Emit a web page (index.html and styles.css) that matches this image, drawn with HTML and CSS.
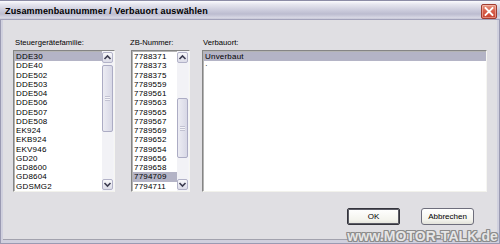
FILE: index.html
```html
<!DOCTYPE html>
<html lang="de">
<head>
<meta charset="utf-8">
<title>Zusammenbaunummer / Verbauort auswählen</title>
<link rel="stylesheet" href="styles.css">
</head>
<body>
<div class="window">
  <div class="titlebar">
    <span class="title">Zusammenbaunummer / Verbauort auswählen</span>
    <span class="close">
      <svg width="16" height="15" viewBox="0 0 16 15"><path d="M4.5 4 L11.5 11 M11.5 4 L4.5 11" stroke="#fff" stroke-width="1.8" stroke-linecap="square"/></svg>
    </span>
  </div>
  <div class="frame">
    <div class="client">
      <div class="columns">
        <div class="col col-family">
          <div class="label label-family">Steuergerätefamilie:</div>
          <div class="listbox">
            <ul class="items">
              <li class="selected">DDE30</li>
              <li>DDE40</li>
              <li>DDE502</li>
              <li>DDE503</li>
              <li>DDE504</li>
              <li>DDE506</li>
              <li>DDE507</li>
              <li>DDE508</li>
              <li>EK924</li>
              <li>EKB924</li>
              <li>EKV946</li>
              <li>GD20</li>
              <li>GD8600</li>
              <li>GD8604</li>
              <li>GDSMG2</li>
            </ul>
            <div class="scrollbar">
              <div class="sb-btn"><svg width="9" height="9" viewBox="0 0 9 9"><path d="M1.5 6 L4.5 3 L7.5 6" fill="none" stroke="#3c3c50" stroke-width="1.6"/></svg></div>
              <div class="sb-track"><div class="sb-thumb" style="margin-top:2px;height:67px"><span class="grip"></span></div></div>
              <div class="sb-btn"><svg width="9" height="9" viewBox="0 0 9 9"><path d="M1.5 3 L4.5 6 L7.5 3" fill="none" stroke="#3c3c50" stroke-width="1.6"/></svg></div>
            </div>
          </div>
        </div>
        <div class="col col-number">
          <div class="label label-number">ZB-Nummer:</div>
          <div class="listbox">
            <ul class="items">
              <li>7788371</li>
              <li>7788373</li>
              <li>7788375</li>
              <li>7789559</li>
              <li>7789561</li>
              <li>7789563</li>
              <li>7789565</li>
              <li>7789567</li>
              <li>7789569</li>
              <li>7789652</li>
              <li>7789654</li>
              <li>7789656</li>
              <li>7789658</li>
              <li class="selected">7794709</li>
              <li>7794711</li>
            </ul>
            <div class="scrollbar">
              <div class="sb-btn"><svg width="9" height="9" viewBox="0 0 9 9"><path d="M1.5 6 L4.5 3 L7.5 6" fill="none" stroke="#3c3c50" stroke-width="1.6"/></svg></div>
              <div class="sb-track"><div class="sb-thumb" style="margin-top:35px;height:60px"><span class="grip"></span></div></div>
              <div class="sb-btn"><svg width="9" height="9" viewBox="0 0 9 9"><path d="M1.5 3 L4.5 6 L7.5 3" fill="none" stroke="#3c3c50" stroke-width="1.6"/></svg></div>
            </div>
          </div>
        </div>
        <div class="col col-place">
          <div class="label label-place">Verbauort:</div>
          <div class="listbox">
            <ul class="items">
              <li class="selected">Unverbaut</li>
              <li>·</li>
            </ul>
          </div>
        </div>
      </div>
      <div class="buttons">
        <button class="btn btn-default">OK</button>
        <button class="btn">Abbrechen</button>
      </div>
    </div>
  </div>
  <div class="watermark">www.MOTOR-TALK.de</div>
</div>
</body>
</html>
```

FILE: styles.css
```css
* { box-sizing: border-box; }

html, body {
  margin: 0;
  padding: 0;
  background: #e0dfe3;
}

body {
  font-family: "Liberation Sans", Arial, sans-serif;
  font-size: 8px;
  color: #000;
}

.window {
  position: relative;
  width: 500px;
  height: 244px;
  display: flex;
  flex-direction: column;
  background: #9a9ab2;
  padding: 0 1px 1px 1px;
  overflow: hidden;
}

.titlebar {
  height: 20px;
  margin: 0 -1px;
  display: flex;
  justify-content: space-between;
  align-items: flex-start;
  border-top: 1px solid #8c8ca6;
  border-bottom: 1px solid #a2a2ba;
  background: linear-gradient(to bottom, #fbfbfe 0%, #e6e6ef 18%, #cdcddd 50%, #bcbcd0 72%, #d6d6e3 92%, #c8c8d8 100%);
}

.title {
  padding: 2px 0 0 5px;
  line-height: 16px;
  font-size: 9px;
  font-weight: bold;
  letter-spacing: 0.15px;
  color: #000;
}

.close {
  margin: 3px 3px 0 0;
  width: 16px;
  height: 15px;
  border-radius: 2px;
  border: 1px solid #a03c30;
  background: linear-gradient(to bottom, #e89a86 0%, #d8604c 45%, #c8412f 100%);
  box-shadow: inset 0 0 0 1px rgba(255, 220, 210, 0.45);
  display: flex;
  align-items: center;
  justify-content: center;
}

.close svg { display: block; margin: -1px; }

.frame {
  flex: 1;
  display: flex;
  background: #d0d0de;
  padding: 0 2px 3px 2px;
}

.client {
  flex: 1;
  background: #e0dfe3;
  border-bottom: 1px solid #a2a2ae;
  padding: 17px 10px 0 10px;
  display: flex;
  flex-direction: column;
}

.columns {
  display: flex;
}

.col-family { width: 102px; margin-right: 16px; }
.col-number { width: 59px; margin-right: 12px; }
.col-place { width: 285px; }

.label {
  height: 13px;
  line-height: 12px;
  font-size: 8px;
  white-space: nowrap;
}

.label-family { padding-left: 2px; font-size: 7.7px; }
.label-number { margin-left: -1px; font-size: 7.6px; }
.label-place { padding-left: 1px; font-size: 7.7px; }

.listbox {
  height: 142px;
  display: flex;
  background: #fff;
  border: 1px solid;
  border-color: #858585 #f6f6f2 #f2f2ec #858585;
  box-shadow: inset 1px 1px 0 #b4b4b4;
}

.items {
  flex: 1;
  list-style: none;
  margin: 0;
  padding: 1px 0 0 1px;
  overflow: hidden;
}

.items li {
  height: 9.25px;
  line-height: 9.25px;
  padding-left: 1px;
  font-size: 8px;
  letter-spacing: 0.2px;
  white-space: nowrap;
}

.items li.selected {
  background: #b4b4c6;
}

.scrollbar {
  width: 12px;
  display: flex;
  flex-direction: column;
  padding: 1px 1px 1px 0;
  background: #f4f4f8;
}

.sb-btn {
  height: 11px;
  border: 1px solid #b2b2c8;
  border-radius: 2px;
  background: linear-gradient(to bottom, #f8f8fb, #dcdce8);
  display: flex;
  align-items: center;
  justify-content: center;
}

.sb-btn svg { display: block; }

.sb-track {
  flex: 1;
  display: flex;
  flex-direction: column;
  background: #f2f2f6;
}

.sb-thumb {
  border: 1px solid #acacc4;
  border-radius: 2px;
  background: linear-gradient(to right, #ececf3, #d8d8e6);
  display: flex;
  align-items: center;
  justify-content: center;
}

.grip {
  width: 5px;
  height: 5px;
  background: repeating-linear-gradient(to bottom, #c2c2d2 0, #c2c2d2 1px, #f4f4f8 1px, #f4f4f8 2px);
}

.buttons {
  display: flex;
  justify-content: flex-end;
  gap: 21px;
  margin-top: 16px;
  padding-right: 13px;
}

.btn {
  width: 53px;
  height: 17px;
  padding: 0;
  font-family: "Liberation Sans", Arial, sans-serif;
  font-size: 8px;
  color: #000;
  border: 1px solid #6e6e7c;
  border-radius: 3px;
  background: linear-gradient(to bottom, #ffffff 0%, #f4f4ee 70%, #e2e2da 100%);
}

.btn-default {
  border-color: #34343c;
  border-radius: 2px;
  box-shadow: inset 0 0 0 1px #5c5c66;
}

.watermark {
  position: absolute;
  right: 2px;
  bottom: 0;
  font-family: "Liberation Sans", Arial, sans-serif;
  font-weight: bold;
  font-size: 14px;
  line-height: 15px;
  letter-spacing: 0.1px;
  color: #e6e6e6;
  text-shadow:
    1px 0 0 #8c8c8c, -1px 0 0 #8c8c8c, 0 1px 0 #8c8c8c, 0 -1px 0 #8c8c8c,
    1px 1px 0 #8c8c8c, -1px -1px 0 #8c8c8c, 1px -1px 0 #8c8c8c, -1px 1px 0 #8c8c8c;
}
```
